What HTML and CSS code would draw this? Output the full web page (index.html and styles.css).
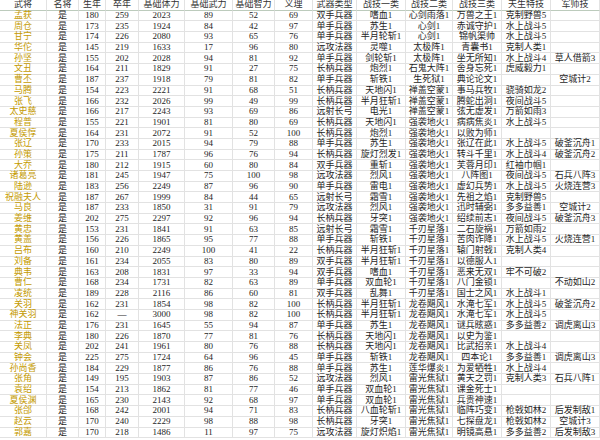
FILE: index.html
```html
<!DOCTYPE html>
<html lang="zh-CN">
<head>
<meta charset="utf-8">
<link rel="stylesheet" href="styles.css">
</head>
<body>
<table class="sheet">
<thead>
<tr class="head"><th>武将</th><th>名将</th><th>生年</th><th>卒年</th><th>基础体力</th><th>基础武力</th><th>基础智力</th><th>义理</th><th>武器类型</th><th>战技一类</th><th>战技二类</th><th>战技三类</th><th>天生特技</th><th>军师技</th></tr>
</thead>
<tbody>
<tr><td class="n">孟获</td><td>是</td><td>180</td><td>259</td><td>2023</td><td>89</td><td>52</td><td>69</td><td>双手兵器</td><td>嗜血1</td><td>心剑雨落1</td><td>万兽之王1</td><td>克制野兽5</td><td></td></tr>
<tr><td class="n">周仓</td><td>是</td><td>173</td><td>235</td><td>1924</td><td>84</td><td>42</td><td>97</td><td>单手兵器</td><td>苏生1</td><td>心剑1</td><td>赤诚守护1</td><td>水上战斗5</td><td></td></tr>
<tr><td class="n">甘宁</td><td>是</td><td>174</td><td>226</td><td>2080</td><td>93</td><td>65</td><td>76</td><td>单手兵器</td><td>半月轮斩1</td><td>心剑1</td><td>锦帆渠帅</td><td>水上战斗5</td><td></td></tr>
<tr><td class="n">华佗</td><td>是</td><td>145</td><td>219</td><td>1633</td><td>17</td><td>96</td><td>80</td><td>远攻法器</td><td>灵噬1</td><td>太极阵1</td><td>青囊书1</td><td>克制人类1</td><td></td></tr>
<tr><td class="n">孙坚</td><td>是</td><td>155</td><td>202</td><td>2028</td><td>94</td><td>81</td><td>92</td><td>单手兵器</td><td>剑轮斩1</td><td>太极阵1</td><td>坐无所知1</td><td>水上战斗4</td><td>草人借箭3</td></tr>
<tr><td class="n">文丑</td><td>是</td><td>164</td><td>211</td><td>1829</td><td>91</td><td>27</td><td>75</td><td>长柄兵器</td><td>炮烈1</td><td>石鬼大阵1</td><td>舍身忘死1</td><td>虎威毅力1</td><td></td></tr>
<tr><td class="n">曹丕</td><td>是</td><td>187</td><td>237</td><td>1918</td><td>79</td><td>81</td><td>82</td><td>单手兵器</td><td>斩铁1</td><td>生死狱1</td><td>典论论文1</td><td></td><td>空城计2</td></tr>
<tr><td class="n">马腾</td><td>是</td><td>154</td><td>223</td><td>2221</td><td>91</td><td>68</td><td>51</td><td>长柄兵器</td><td>天地闪1</td><td>禅盖空蒙1</td><td>事马兵牧1</td><td>骁骑如龙2</td><td></td></tr>
<tr><td class="n">张飞</td><td>是</td><td>166</td><td>232</td><td>2026</td><td>99</td><td>49</td><td>99</td><td>长柄兵器</td><td>半月狂斩1</td><td>禅盖空蒙1</td><td>腾蛇出洞1</td><td>夜间战斗5</td><td></td></tr>
<tr><td class="n">太史慈</td><td>是</td><td>166</td><td>217</td><td>2243</td><td>93</td><td>69</td><td>86</td><td>远射长弓</td><td>电光1</td><td>禅盖空蒙1</td><td>弦无虚发1</td><td>万箭如雨3</td><td></td></tr>
<tr><td class="n">程普</td><td>是</td><td>155</td><td>221</td><td>1901</td><td>81</td><td>80</td><td>69</td><td>长柄兵器</td><td>天地闪1</td><td>强袭地火1</td><td>病病焦炎1</td><td>水上战斗5</td><td></td></tr>
<tr><td class="n">夏侯惇</td><td>是</td><td>164</td><td>231</td><td>2072</td><td>91</td><td>52</td><td>100</td><td>长柄兵器</td><td>炮烈1</td><td>强袭地火1</td><td>以败为师1</td><td></td><td></td></tr>
<tr><td class="n">张辽</td><td>是</td><td>170</td><td>233</td><td>2015</td><td>94</td><td>79</td><td>88</td><td>单手兵器</td><td>苏生1</td><td>强袭地火1</td><td>张辽在此1</td><td>水上战斗5</td><td>破釜沉舟1</td></tr>
<tr><td class="n">孙策</td><td>是</td><td>175</td><td>211</td><td>1787</td><td>96</td><td>76</td><td>94</td><td>长柄兵器</td><td>旋灯烈发1</td><td>强袭地火1</td><td>转斗千里1</td><td>水上战斗4</td><td>破釜沉舟2</td></tr>
<tr><td class="n">大乔</td><td>是</td><td>180</td><td>212</td><td>1915</td><td>60</td><td>80</td><td>84</td><td>双手兵器</td><td>重斩1</td><td>强袭地火1</td><td>芙蓉月印1</td><td>红袖巾帼1</td><td></td></tr>
<tr><td class="n">诸葛亮</td><td>是</td><td>181</td><td>245</td><td>1947</td><td>75</td><td>100</td><td>98</td><td>远攻法器</td><td>烈风1</td><td>强袭地火1</td><td>八阵图1</td><td>夜间战斗5</td><td>石兵八阵3</td></tr>
<tr><td class="n">陆逊</td><td>是</td><td>183</td><td>256</td><td>2249</td><td>87</td><td>96</td><td>90</td><td>单手兵器</td><td>雷电1</td><td>强袭地火1</td><td>虚幻兵势1</td><td>水上战斗5</td><td>火烧连营3</td></tr>
<tr><td class="n">祝融夫人</td><td>是</td><td>187</td><td>267</td><td>1999</td><td>84</td><td>44</td><td>65</td><td>远射长弓</td><td>霜雪1</td><td>强袭地火1</td><td>先祖之焰1</td><td>克制野兽5</td><td></td></tr>
<tr><td class="n">马良</td><td>是</td><td>187</td><td>233</td><td>1850</td><td>31</td><td>91</td><td>79</td><td>远攻法器</td><td>烈风1</td><td>强袭地火1</td><td>迅时辅弼1</td><td>多多益善1</td><td>空城计2</td></tr>
<tr><td class="n">姜维</td><td>是</td><td>202</td><td>275</td><td>2297</td><td>92</td><td>96</td><td>94</td><td>长柄兵器</td><td>牙突1</td><td>强袭地火1</td><td>绍续前志1</td><td>夜间战斗5</td><td>破釜沉舟3</td></tr>
<tr><td class="n">黄忠</td><td>是</td><td>153</td><td>231</td><td>1841</td><td>91</td><td>63</td><td>85</td><td>远射长弓</td><td>霜雪1</td><td>千刃星落1</td><td>二石旋祸1</td><td>万箭如雨2</td><td></td></tr>
<tr><td class="n">黄盖</td><td>是</td><td>156</td><td>226</td><td>1865</td><td>95</td><td>77</td><td>88</td><td>单手兵器</td><td>斩铁1</td><td>千刃星落1</td><td>苦肉诈降1</td><td>水上战斗5</td><td>火烧连营1</td></tr>
<tr><td class="n">吕布</td><td>是</td><td>160</td><td>210</td><td>2249</td><td>100</td><td>41</td><td>22</td><td>长柄兵器</td><td>半月狂斩1</td><td>千刃星落1</td><td>辕门射戟1</td><td>克制人类4</td><td></td></tr>
<tr><td class="n">刘备</td><td>是</td><td>161</td><td>234</td><td>2055</td><td>83</td><td>80</td><td>89</td><td>双手兵器</td><td>半月狂斩1</td><td>千刃星落1</td><td>以德服人1</td><td></td><td></td></tr>
<tr><td class="n">典韦</td><td>是</td><td>163</td><td>208</td><td>1831</td><td>97</td><td>33</td><td>94</td><td>双手兵器</td><td>嗜血1</td><td>千刃星落1</td><td>恶来无双1</td><td>牢不可破2</td><td></td></tr>
<tr><td class="n">曹仁</td><td>是</td><td>168</td><td>234</td><td>1731</td><td>82</td><td>63</td><td>89</td><td>单手兵器</td><td>双血轮1</td><td>千刃星落1</td><td>八门金锁1</td><td></td><td>不动如山2</td></tr>
<tr><td class="n">凌统</td><td>是</td><td>189</td><td>228</td><td>2116</td><td>86</td><td>60</td><td>81</td><td>双手兵器</td><td>乱舞1</td><td>千刃星落1</td><td>国士之风1</td><td>水上战斗1</td><td></td></tr>
<tr><td class="n">关羽</td><td>是</td><td>162</td><td>231</td><td>1854</td><td>98</td><td>82</td><td>100</td><td>长柄兵器</td><td>半月狂斩1</td><td>龙卷飓风1</td><td>水淹七军1</td><td>水上战斗5</td><td>破釜沉舟2</td></tr>
<tr><td class="n">神关羽</td><td>是</td><td>162</td><td>—</td><td>3000</td><td>98</td><td>82</td><td>100</td><td>长柄兵器</td><td>半月狂斩1</td><td>龙卷飓风1</td><td>水淹七军1</td><td>水上战斗5</td><td></td></tr>
<tr><td class="n">法正</td><td>是</td><td>176</td><td>231</td><td>1645</td><td>55</td><td>94</td><td>87</td><td>单手兵器</td><td>苏生1</td><td>龙卷飓风1</td><td>谜兵眩惑1</td><td>多多益善2</td><td>调虎离山3</td></tr>
<tr><td class="n">李典</td><td>是</td><td>180</td><td>226</td><td>1870</td><td>77</td><td>81</td><td>76</td><td>长柄兵器</td><td>天地闪1</td><td>龙卷飓风1</td><td>以史为鉴1</td><td></td><td></td></tr>
<tr><td class="n">关凤</td><td>是</td><td>202</td><td>241</td><td>1961</td><td>80</td><td>76</td><td>88</td><td>长柄兵器</td><td>天地闪1</td><td>龙卷飓风1</td><td>比武招亲1</td><td>水上战斗4</td><td></td></tr>
<tr><td class="n">钟会</td><td>是</td><td>225</td><td>275</td><td>1724</td><td>64</td><td>96</td><td>45</td><td>单手兵器</td><td>斩铁1</td><td>龙卷飓风1</td><td>四本论1</td><td>多多益善1</td><td>调虎离山3</td></tr>
<tr><td class="n">孙尚香</td><td>是</td><td>184</td><td>229</td><td>1877</td><td>86</td><td>76</td><td>88</td><td>单手兵器</td><td>苏生1</td><td>莲华爆炎1</td><td>为爱牺牲1</td><td>水上战斗4</td><td></td></tr>
<tr><td class="n">张角</td><td>是</td><td>149</td><td>195</td><td>1903</td><td>87</td><td>86</td><td>52</td><td>远攻法器</td><td>烈风1</td><td>雷光焦狱1</td><td>黄天之罚1</td><td>克制人类3</td><td>石兵八阵1</td></tr>
<tr><td class="n">袁绍</td><td>是</td><td>154</td><td>213</td><td>1862</td><td>81</td><td>77</td><td>46</td><td>单手兵器</td><td>双血轮1</td><td>雷光焦狱1</td><td>课金死士1</td><td></td><td></td></tr>
<tr><td class="n">夏侯渊</td><td>是</td><td>165</td><td>230</td><td>2143</td><td>92</td><td>68</td><td>97</td><td>单手兵器</td><td>双血轮1</td><td>雷光焦狱1</td><td>兵贵神速1</td><td></td><td></td></tr>
<tr><td class="n">张郃</td><td>是</td><td>168</td><td>242</td><td>2001</td><td>94</td><td>71</td><td>83</td><td>长柄兵器</td><td>八血轮斩1</td><td>雷光焦狱1</td><td>临阵巧变1</td><td>枪戟如林2</td><td>后发制敌1</td></tr>
<tr><td class="n">赵云</td><td>是</td><td>170</td><td>240</td><td>2229</td><td>98</td><td>88</td><td>98</td><td>长柄兵器</td><td>牙突1</td><td>雷光焦狱1</td><td>七探盘龙1</td><td>枪戟如林2</td><td>空城计3</td></tr>
<tr><td class="n">郭嘉</td><td>是</td><td>170</td><td>218</td><td>1486</td><td>11</td><td>97</td><td>75</td><td>远攻法器</td><td>旋灯炽焰1</td><td>雷光焦狱1</td><td>明镜高悬1</td><td>多多益善2</td><td>后发制敌3</td></tr>
</tbody>
</table>
</body>
</html>
```
FILE: styles.css
```css
html, body {
  margin: 0;
  padding: 0;
  background: #ffffff;
}
.sheet {
  display: block;
  width: 600px;
  border-collapse: separate;
  border-spacing: 0;
  font-family: "Liberation Serif", "Noto Sans CJK SC", serif;
  font-size: 9px;
  color: #1e1e1e;
}
.sheet thead,
.sheet tbody {
  display: block;
}
.sheet tr {
  display: grid;
  grid-template-columns: 47px 32px 27px 33px 46px 48px 42px 38px 44px 49px 47px 49px 49px 49px;
  height: 10.7px;
}
.sheet th,
.sheet td {
  display: flex;
  align-items: center;
  justify-content: center;
  box-sizing: border-box;
  padding: 0;
  min-width: 0;
  line-height: 9px;
  white-space: nowrap;
  overflow: visible;
  border-right: 1px solid #e2e2e2;
  border-bottom: 1px solid #e2e2e2;
  font-weight: normal;
}
.sheet th {
  color: #333333;
}
.sheet tr.head th {
  border-bottom-color: #bccbbc;
}
.sheet td.n {
  color: #c49a00;
}
```
